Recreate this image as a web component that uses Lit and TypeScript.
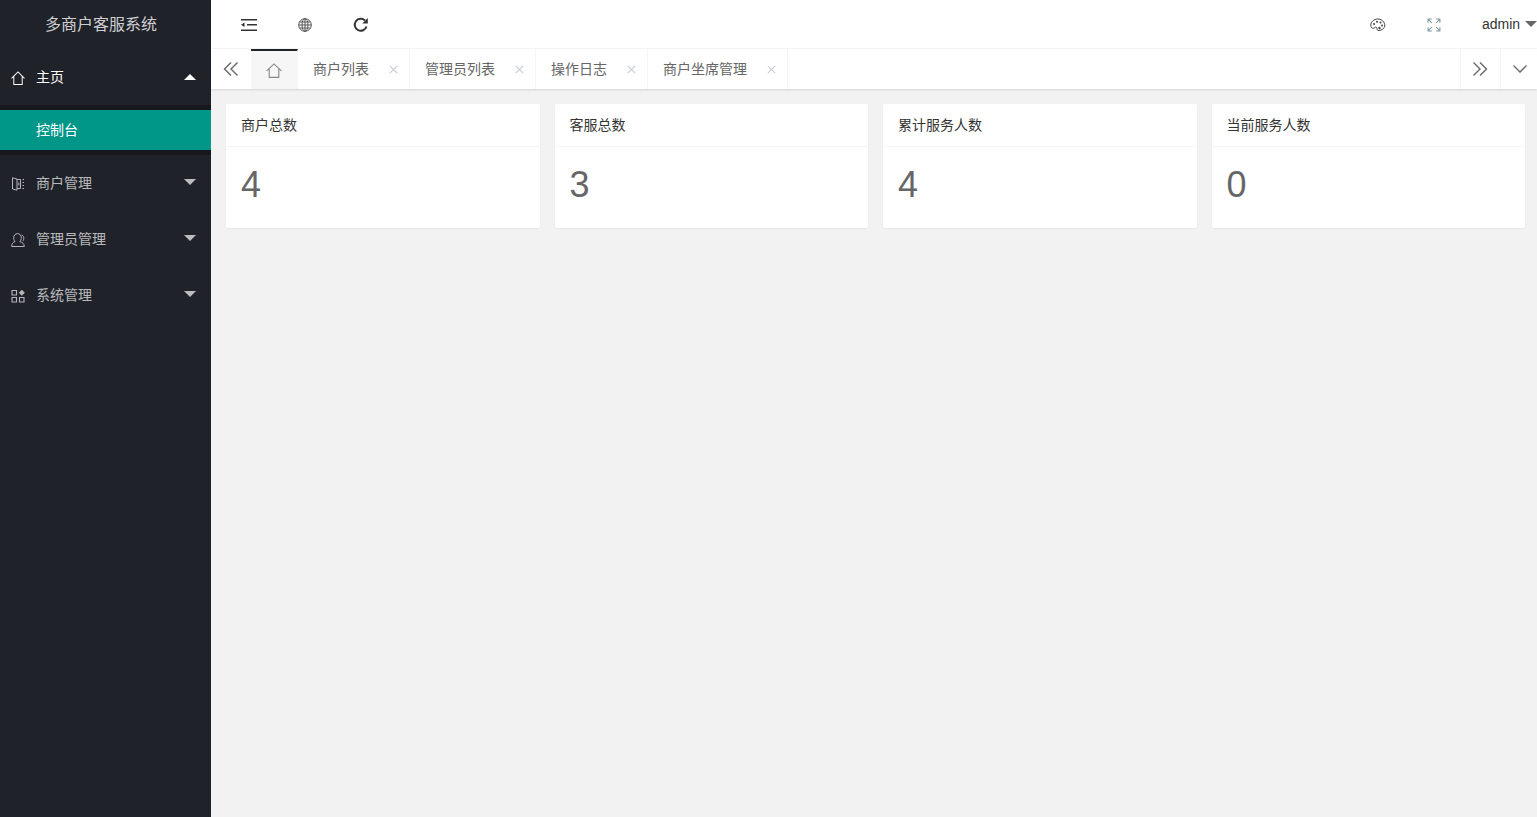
import { LitElement, html, css, svg } from "lit";
import { customElement } from "lit/decorators.js";

const homeIcon = (c: string, w = 14, h = 14) => svg`<svg viewBox="0 0 16 15" width="${w}" height="${h}" fill="none" stroke="${c}" stroke-width="1.100" preserveAspectRatio="none"><path d="M.6 7.800 8 .9l7.400 6.900M3.200 6v8.400h9.600V6"/></svg>`;

@customElement("app-root")
export class AppRoot extends LitElement {
  static styles = css`
    :host { display: block; width: 1537px; height: 817px; overflow: hidden; background: #f2f2f2;
      font-family: "Liberation Sans", "Noto Sans CJK SC", sans-serif; font-size: 14px; color: #333; }
    .app { display: flex; height: 817px; }
    svg { display: block; flex: none; }
    .side { width: 211px; flex: none; background: #20222a; display: flex; flex-direction: column; }
    .logo { height: 49px; display: flex; align-items: center; justify-content: center; color: rgba(255,255,255,.8); font-size: 16px; padding: 0 9px 3px 0; box-sizing: border-box; }
    .nav { height: 56px; display: flex; align-items: center; padding-left: 11px; color: rgba(255,255,255,.7); position: relative; }
    .nav.on { color: #fff; }
    .nav .t { margin-left: 11px; padding-bottom: 2px; }
    .nav svg { margin-top: 1px; }
    .caret { position: absolute; left: 184px; top: 24px; width: 0; height: 0; border: 6px solid transparent; border-top-width: 6.500px; border-top-color: rgba(255,255,255,.7); border-bottom-width: 0; }
    .caret.up { top: 25px; border-top-width: 0; border-bottom: 6px solid #fff; }
    .sub { background: #17181e; padding: 5px 0; }
    .sub div { height: 40px; background: #009688; color: #fff; display: flex; align-items: center; padding: 0 0 2px 36px; box-sizing: border-box; }
    .main { flex: 1; min-width: 0; display: flex; flex-direction: column; }
    .top { height: 49px; background: #fff; display: flex; align-items: center; border-bottom: 1px solid #f6f6f6; flex: none; box-sizing: border-box; }
    .tool { width: 56px; display: flex; justify-content: center; margin-top: 2px; }
    .top .tool:first-child { margin-left: 10px; }
    .spacer { flex: 1; }
    .user { width: 75px; display: flex; align-items: center; color: #333; padding-left: 20px; box-sizing: border-box; }
    .user .tri { width: 0; height: 0; border: 6px solid transparent; border-top-color: #666; border-bottom-width: 0; margin-left: 5px; margin-top: -1px; }
    .right-tools { display: flex; align-items: center; }
    .tabs { height: 40px; background: #fff; display: flex; box-shadow: 0 1px 2px rgba(0,0,0,.12); flex: none; color: #666; position: relative; }
    .arrow { width: 40px; display: flex; align-items: center; justify-content: center; flex: none; }
    .home { width: 47px; background: #f6f6f6; border-top: 2px solid #20222a; box-sizing: border-box; display: flex; align-items: center; justify-content: center; border-right: 1px solid #f6f6f6; }
    .tab { display: flex; align-items: center; padding: 0 0 2px 15px; border-right: 1px solid #f6f6f6; box-sizing: border-box; position: relative; }
    .x { position: absolute; top: 16px; width: 9px; height: 9px; }
    .fill { flex: 1; }
    .rb { width: 40px; border-left: 1px solid #f6f6f6; padding-right: 2px; box-sizing: border-box; display: flex; align-items: center; justify-content: center; }
    .rb.last { width: 37px; padding: 0 0 0 2px; }
    .cards { display: grid; grid-template-columns: repeat(4, 1fr); gap: 15px; padding: 15px 12px 0 15px; }
    .card { background: #fff; border-radius: 2px; box-shadow: 0 1px 2px rgba(0,0,0,.05); height: 124px; }
    .h { height: 43px; line-height: 42px; padding: 0 15px; border-bottom: 1px solid #f6f6f6; color: #333; box-sizing: border-box; }
    .n { padding: 15px 15px; font-size: 36px; line-height: 45px; color: #666; }
  `;

  nav(label: string, icon: unknown) {
    return html`<div class="nav">${icon}<span class="t">${label}</span><i class="caret"></i></div>`;
  }

  tab(label: string, w: number, xLeft: number) {
    return html`<div class="tab" style="width:${w}px">${label}<svg class="x" style="left:${xLeft}px" viewBox="0 0 9 9" fill="none" stroke="#c8ccd4" stroke-width="1.100"><path d="M.8.800l7.400 7.400M8.200.800 .8 8.200"/></svg></div>`;
  }

  render() {
    const g = "#b4b6ba";
    return html`<div class="app">
      <aside class="side">
        <div class="logo">多商户客服系统</div>
        <div class="nav on">${homeIcon("#fff")}<span class="t">主页</span><i class="caret up"></i></div>
        <div class="sub"><div>控制台</div></div>
        ${this.nav("商户管理", svg`<svg viewBox="0 0 14 14" width="14" height="14" fill="none" stroke="${g}" stroke-width="1"><path d="M1.500 .8 6 2v11.200l-4.500-1.200zM6 2.500h3.500v9H6M11.500 2.500H13M11.500 5.500H13M11.500 8.500H13M11.500 11.500H13M7.800 5.500v3"/></svg>`)}
        ${this.nav("管理员管理", svg`<svg viewBox="0 0 14 14" width="14" height="14" fill="none" stroke="${g}" stroke-width="1"><path d="M.7 13.500c0-2.800 1.300-4.200 3.300-5C3 7.400 2.700 6 2.700 4.800 2.700 2.400 4.300.6 6.500.6s3.800 1.800 3.800 4.200c0 1.200-.5 2.600-1.500 3.700 2.600.8 4.500 2.200 4.500 5z"/><path d="M10.500 2c1.500.5 2.300 1.700 2.300 3.300 0 1-.3 1.900-.8 2.600"/></svg>`)}
        ${this.nav("系统管理", svg`<svg viewBox="0 0 14 14" width="14" height="14" fill="none" stroke="${g}" stroke-width="1.100"><path d="M1 1.500h4.500V6H1zM1 8.500h4.500V13H1zM8.500 8.500H13V13H8.500z"/><path d="M10.800 .8 13.800 3.800 10.800 6.800 7.800 3.800z" fill="${g}" stroke="none"/></svg>`)}
      </aside>
      <div class="main">
        <header class="top">
          <div class="tool"><svg viewBox="0 0 16 14" width="16" height="14" fill="#333"><path d="M0 1h16v1.500H0zM6 6h10v1.500H6zM0 11.500h16V13H0zM0 6.750 3.500 4.500v4.500z"/></svg></div>
          <div class="tool"><svg viewBox="0 0 14 14" width="14" height="14" fill="none" stroke="#555" stroke-width="1"><circle cx="7" cy="7" r="6.300"/><ellipse cx="7" cy="7" rx="3" ry="6.300"/><path d="M7 .7v12.600M.7 7h12.600M1.500 4h11M1.500 10h11"/></svg></div>
          <div class="tool"><svg viewBox="0 0 16 16" width="16" height="16" fill="none" stroke="#333" stroke-width="2"><path d="M13.500 9.500A6 6 0 1 1 12 3.500"/><path d="M14.800 1v5.500H9.300z" fill="#333" stroke="none"/></svg></div>
          <div class="spacer"></div>
          <div class="right-tools">
            <div class="tool"><svg viewBox="0 0 16 14" width="16" height="14" fill="none" stroke="#444" stroke-width="1"><path d="M8 1C3.800 1 .8 3.800.8 7.200c0 2 1.200 3.200 2.600 3 1.500-.2 2-1.500 3-1 1 .6 0 2 1.200 3 1.300 1 5-.3 6.700-2.700C16 6 13 1 8 1z"/><g fill="#444" stroke="none"><circle cx="4" cy="6" r="1"/><circle cx="7" cy="3.800" r="1"/><circle cx="10.500" cy="4.500" r="1"/><circle cx="12" cy="7.500" r="1"/><circle cx="9.500" cy="10" r="1.200"/></g></svg></div>
            <div class="tool"><svg viewBox="0 0 13 13" width="14" height="14" fill="none" stroke="#7f9aa5" stroke-width="1"><path d="M1 4.500V1h3.500M1 1l3.500 3.500M12 4.500V1H8.500M12 1 8.500 4.500M1 8.500V12h3.500M1 12l3.500-3.500M12 8.500V12H8.500M12 12 8.500 8.500"/></svg></div>
            <div class="user">admin<i class="tri"></i></div>
          </div>
        </header>
        <nav class="tabs">
          <div class="arrow"><svg viewBox="0 0 16 16" width="16" height="16" fill="none" stroke="#666" stroke-width="1.400"><path d="M8 1.500 1.500 8 8 14.500M14.500 1.500 8 8l6.500 6.500"/></svg></div>
          <div class="home">${homeIcon("#888", 16, 15)}</div>
          ${this.tab("商户列表", 112, 91)}
          ${this.tab("管理员列表", 126, 105)}
          ${this.tab("操作日志", 112, 91)}
          ${this.tab("商户坐席管理", 140, 119)}
          <div class="fill"></div>
          <div class="rb"><svg viewBox="0 0 16 16" width="16" height="16" fill="none" stroke="#666" stroke-width="1.400"><path d="M1.500 1.500 8 8l-6.500 6.500M8 1.500 14.500 8 8 14.500"/></svg></div>
          <div class="rb last"><svg viewBox="0 0 16 10" width="16" height="10" fill="none" stroke="#666" stroke-width="1.300"><path d="M1.500 1.500 8 8l6.500-6.500"/></svg></div>
        </nav>
        <section class="cards">
          ${[["商户总数", "4"], ["客服总数", "3"], ["累计服务人数", "4"], ["当前服务人数", "0"]].map(([a, b]) => html`<div class="card"><div class="h">${a}</div><div class="n">${b}</div></div>`)}
        </section>
      </div>
    </div>`;
  }
}
